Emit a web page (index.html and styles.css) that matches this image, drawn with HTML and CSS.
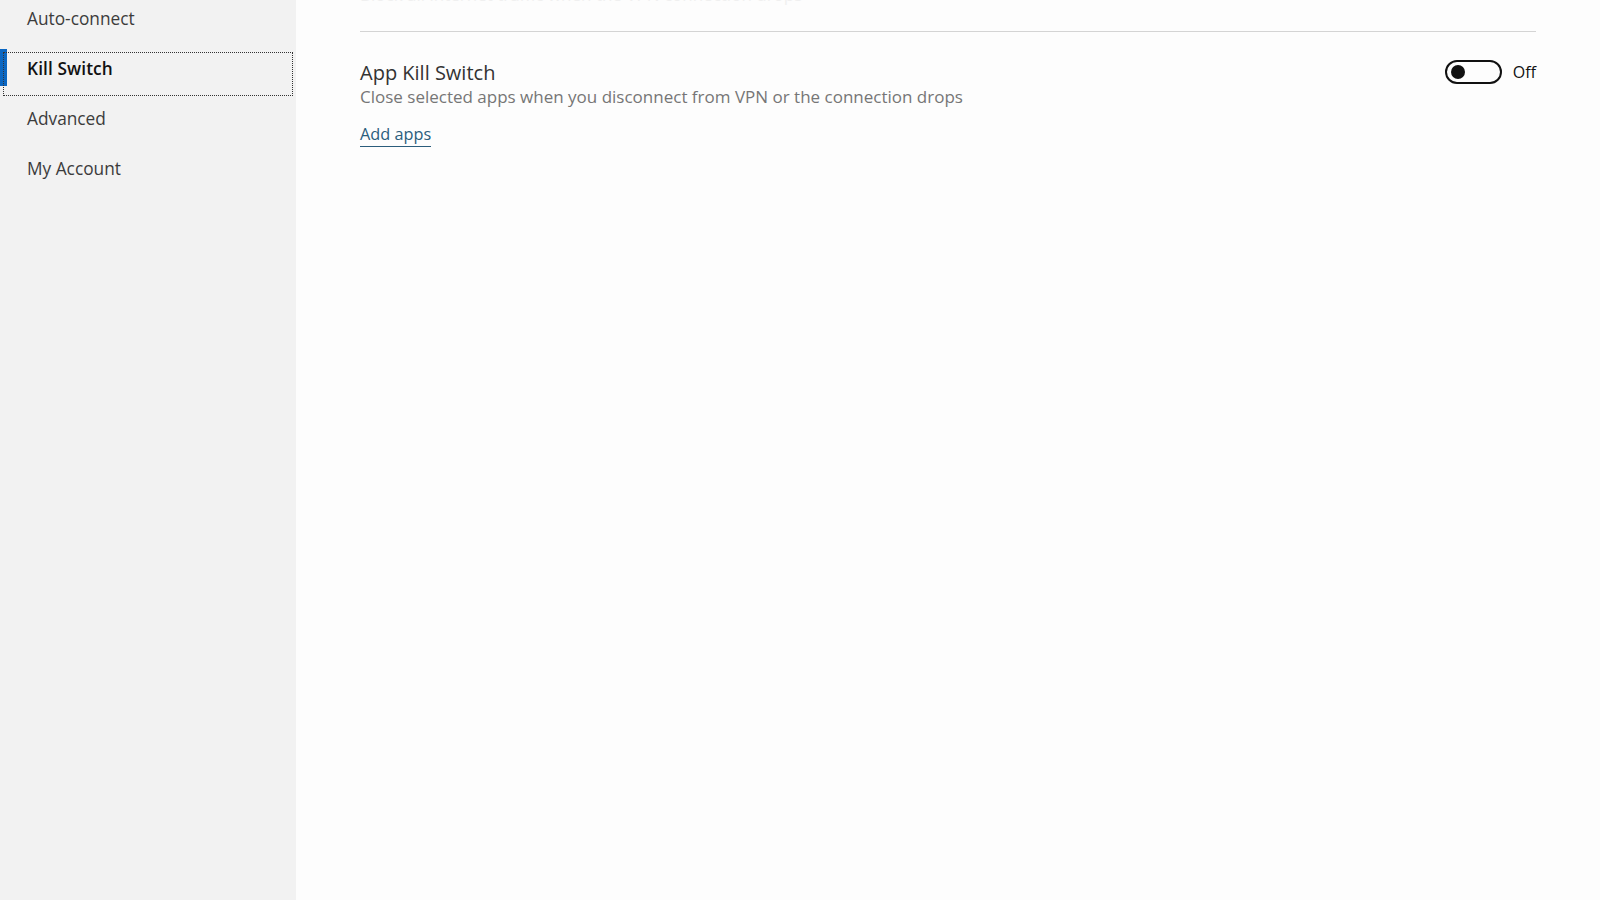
FILE: index.html
```html
<!DOCTYPE html>
<html lang="en">
<head>
<meta charset="utf-8">
<title>Settings - Kill Switch</title>
<link rel="stylesheet" href="styles.css">
</head>
<body>
<div class="app">
  <nav class="sidebar">
    <ul class="nav-list">
      <li class="nav-item">Auto-connect</li>
      <li class="nav-item active"><span class="indicator"></span><span class="focus-ring"></span>Kill Switch</li>
      <li class="nav-item">Advanced</li>
      <li class="nav-item">My Account</li>
    </ul>
  </nav>
  <main class="content">
    <div class="prev-setting">
      <p class="prev-desc">Block all internet traffic when the VPN connection drops</p>
    </div>
    <section class="setting">
      <div class="setting-text">
        <h2 class="setting-title">App Kill Switch</h2>
        <p class="setting-desc">Close selected apps when you disconnect from VPN or the connection drops</p>
        <a class="setting-link" href="#">Add apps</a>
      </div>
      <div class="toggle-wrap">
        <span class="toggle"><span class="knob"></span></span>
        <span class="toggle-label">Off</span>
      </div>
    </section>
  </main>
</div>
</body>
</html>
```

FILE: styles.css
```css
* { box-sizing: border-box; }
html, body {
  margin: 0;
  padding: 0;
  height: 100%;
}
body {
  font-family: "Open Sans", "Noto Sans", sans-serif;
  background: #fdfdfd;
  color: #333;
  overflow: hidden;
}
.app {
  display: flex;
  height: 900px;
}
.sidebar {
  width: 296px;
  flex: 0 0 296px;
  background: #f2f2f2;
}
.nav-list {
  list-style: none;
  margin: -1px 0 0 0;
  padding: 0;
}
.nav-item {
  position: relative;
  height: 50px;
  padding: 10px 0 0 27px;
  font-size: 17.3px;
  line-height: 20px;
  color: #3c3c3c;
}
.nav-item.active {
  font-weight: 600;
  color: #111;
  letter-spacing: 0.1px;
}
.indicator {
  position: absolute;
  left: 0;
  top: 0;
  width: 7px;
  height: 37px;
  background: #0a66c2;
}
.focus-ring {
  position: absolute;
  left: 3px;
  right: 3px;
  top: 3px;
  bottom: 3px;
  border: 1px dotted #333;
}
.content {
  flex: 1;
  padding: 0 64px;
}
.prev-setting {
  margin-top: -15px;
  height: 47px;
  border-bottom: 1px solid #d4d4d4;
}
.prev-desc {
  margin: 0;
  font-size: 17px;
  line-height: 20px;
  color: #f0f0f0;
}
.setting {
  display: flex;
  justify-content: space-between;
  align-items: flex-start;
  padding-top: 27px;
}
.setting-title {
  margin: 0;
  font-size: 20px;
  font-weight: 400;
  line-height: 27px;
  color: #333;
}
.setting-desc {
  margin: 0;
  font-size: 17px;
  line-height: 22px;
  color: #767676;
}
.setting-link {
  display: inline-block;
  margin-top: 16px;
  font-size: 16.3px;
  line-height: 20px;
  color: #2b5d7c;
  text-decoration: none;
  border-bottom: 1px solid #2b5d7c;
  padding-bottom: 2px;
}
.toggle-wrap {
  display: flex;
  align-items: center;
  gap: 11px;
  margin-top: 1px;
}
.toggle {
  display: flex;
  align-items: center;
  width: 57px;
  height: 24px;
  border: 2px solid #111;
  border-radius: 12px;
  padding-left: 4px;
}
.knob {
  width: 14px;
  height: 14px;
  border-radius: 50%;
  background: #111;
}
.toggle-label {
  font-size: 16px;
  line-height: 20px;
  color: #111;
}
```
